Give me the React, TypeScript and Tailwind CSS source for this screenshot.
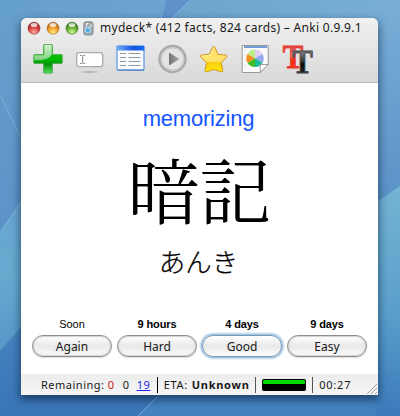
import React from "react";

function Wallpaper() {
  return (
    <svg className="absolute inset-0" width="400" height="416" viewBox="0 0 400 416" aria-hidden="true">
      <defs>
        <linearGradient id="sky" x1="0" y1="0" x2="1" y2="0">
          <stop offset="0" stopColor="#659fcb" />
          <stop offset=".4" stopColor="#6ba4ce" />
          <stop offset="1" stopColor="#78aed6" />
        </linearGradient>
        <linearGradient id="leftTop" x1="0" y1="0" x2="0" y2="1">
          <stop offset="0" stopColor="#679fcb" />
          <stop offset="1" stopColor="#5b93c8" />
        </linearGradient>
        <linearGradient id="leftTeal" x1="0" y1="0" x2="0" y2="1">
          <stop offset="0" stopColor="#69a5cf" />
          <stop offset=".5" stopColor="#66a9cf" />
          <stop offset="1" stopColor="#5598c9" />
        </linearGradient>
        <linearGradient id="deep" x1="0" y1="0" x2="0" y2="1">
          <stop offset="0" stopColor="#4682be" />
          <stop offset="1" stopColor="#3975b7" />
        </linearGradient>
        <linearGradient id="rightTop" x1="0" y1="0" x2="0" y2="1">
          <stop offset="0" stopColor="#78aed6" />
          <stop offset="1" stopColor="#5a92c7" />
        </linearGradient>
        <linearGradient id="rightTeal" x1="0" y1="0" x2="0" y2="1">
          <stop offset="0" stopColor="#74b3d3" />
          <stop offset=".55" stopColor="#5a9fcb" />
          <stop offset="1" stopColor="#3b7abb" />
        </linearGradient>
      </defs>
      <rect width="400" height="416" fill="url(#sky)" />
      <path d="M0 18H22V200L0 233Z" fill="url(#leftTop)" />
      <path d="M0 95L22 140V200L0 150Z" fill="#6399cb" opacity=".3" />
      <path d="M0 233L22 200V326L0 351Z" fill="url(#leftTeal)" />
      <path d="M0 351L22 326V394H160L138 416H0Z" fill="url(#deep)" />
      <path d="M138 416L160 394H378V416Z" fill="#4482bf" />
      <path d="M376 0H400V186L376 203Z" fill="url(#rightTop)" />
      <path d="M376 203L400 186V416H376Z" fill="url(#rightTeal)" />
      <path d="M166 0H190L160 30Z" fill="#5f92cb" />
      <path d="M190 0L160 30M138 416L160 394M0 95L22 140M0 233L22 200" stroke="#86b8dc" strokeWidth=".8" fill="none" />
    </svg>
  );
}

const lights = [
  { id: "close", dark: "#8d1d1d", mid: "#d94b48", light: "#ffb0a6" },
  { id: "min", dark: "#a35a10", mid: "#f0a02c", light: "#ffee8c" },
  { id: "max", dark: "#2d6915", mid: "#6fb83a", light: "#d0fa96" },
];

function TrafficLight({ id, dark, mid, light }: { id: string; dark: string; mid: string; light: string }) {
  return (
    <svg width="14" height="14" viewBox="0 0 14 14">
      <defs>
        <radialGradient id={id} cx=".5" cy=".85" r=".8">
          <stop offset="0" stopColor={light} />
          <stop offset=".5" stopColor={mid} />
          <stop offset="1" stopColor={dark} />
        </radialGradient>
      </defs>
      <circle cx="7" cy="7.2" r="6" fill={`url(#${id})`} stroke={dark} strokeOpacity=".65" strokeWidth=".8" />
      <ellipse cx="7" cy="3.9" rx="3.4" ry="2" fill="#fff" opacity=".75" />
    </svg>
  );
}

function DeckIcon() {
  return (
    <svg width="11" height="15" viewBox="0 0 11 15">
      <rect x=".8" y=".8" width="9.2" height="13.2" rx="2" fill="#a4a8aa" stroke="#858a8c" />
      <path d="M3 2h3L3 5zM8 3l1.5 2L7 6z" fill="#e7e9ea" />
      <circle cx="4.8" cy="8.8" r="3.2" fill="#c4dfed" />
      <path d="M4.8 5.5l1 2.2 2.3.3-1.7 1.5.5 2.4-2.1-1.2-2.1 1.2.4-2.4L1.6 8l2.3-.3z" fill="#50aee4" />
    </svg>
  );
}

function AddIcon() {
  return (
    <svg width="30" height="30" viewBox="0 0 30 30">
      <defs>
        <linearGradient id="plus" x1="0" y1="0" x2="0" y2="1">
          <stop offset="0" stopColor="#31b32b" /><stop offset=".5" stopColor="#00bd00" />
          <stop offset=".7" stopColor="#05930d" /><stop offset="1" stopColor="#56e360" />
        </linearGradient>
        <linearGradient id="gloss" x1="0" y1="0" x2="0" y2="1">
          <stop offset="0" stopColor="#d1f3ce" /><stop offset="1" stopColor="#7ecf7c" />
        </linearGradient>
      </defs>
      <path d="M11.5.5H18.5Q19.5.5 19.5 1.5V10.5H28.5Q29.3 10.5 29.3 11.5V18.5Q29.3 19.4 28.5 19.4H19.5V28.5Q19.5 29.3 18.5 29.3H11.5Q10.5 29.3 10.5 28.5V19.4H1.5Q.7 19.4.7 18.5V11.5Q.7 10.5 1.5 10.5H10.5V1.5Q10.5.5 11.5.5Z" fill="url(#plus)" stroke="#49a348" strokeWidth=".7" />
      <path d="M11.3 1.1H18.7V10.6Q17 14.5 11 15.5Q8 16.5 1.3 16.2V11.2H11.3Z" fill="url(#gloss)" />
    </svg>
  );
}

function FieldIcon() {
  return (
    <svg width="30" height="30" viewBox="0 0 30 30">
      <defs><radialGradient id="fieldShade"><stop stopColor="#777" stopOpacity=".7" /><stop offset="1" stopColor="#999" stopOpacity="0" /></radialGradient></defs>
      <rect x="1.7" y="8.7" width="26" height="14" rx="2.5" fill="#fff" stroke="#aaa" strokeWidth="1.3" />
      <path d="M5.2 11.5h2M8.2 11.5h2M5.2 19.5h2M8.2 19.5h2M7.7 12v7" stroke="#777" strokeWidth=".9" fill="none" />
      <ellipse cx="14.5" cy="28" rx="12" ry="1.3" fill="url(#fieldShade)" />
    </svg>
  );
}

function BrowseIcon() {
  return (
    <svg width="30" height="30" viewBox="0 0 30 30">
      <defs><linearGradient id="bar"><stop stopColor="#70aef6" /><stop offset=".6" stopColor="#1555e1" /><stop offset="1" stopColor="#1869ed" /></linearGradient></defs>
      <rect x="1" y="1.8" width="27" height="24.3" rx="1" fill="#fafcff" stroke="#639ae0" strokeWidth="1.3" />
      <path d="M.7 2H28.2V6.5H.7Z" fill="url(#bar)" />
      <path d="M2 26H28" stroke="#477abc" />
      <path d="M4 9.5h6m2.5 0h12M4 13.5h6m2.5 0h12M4 17.5h6m2.5 0h12M4 21.5h6m2.5 0h12" stroke="#90979d" strokeWidth="1" />
    </svg>
  );
}

function PlayIcon() {
  return (
    <svg width="30" height="30" viewBox="0 0 30 30">
      <defs><linearGradient id="play"><stop stopColor="#707070" /><stop offset="1" stopColor="#aaa" /></linearGradient></defs>
      <circle cx="14.5" cy="15" r="13" fill="#e4e4e4" stroke="#aaa" strokeWidth="2.4" />
      <circle cx="14.5" cy="15" r="11" fill="none" stroke="#c5c5c5" strokeWidth="1" />
      <path d="M11 8.5L21.5 15L11 21.5Z" fill="url(#play)" />
    </svg>
  );
}

function StarIcon() {
  return (
    <svg width="30" height="30" viewBox="0 0 30 30">
      <defs><linearGradient id="star" x1="0" y1="0" x2="0" y2="1"><stop stopColor="#ffe06b" /><stop offset=".58" stopColor="#ffe36c" /><stop offset=".62" stopColor="#f9ce16" /><stop offset="1" stopColor="#ffe900" /></linearGradient></defs>
      <path d="M13.5 3.3Q14.7 1.8 15.9 3.3L19.1 10.3L27.3 11.2Q29 11.7 27.7 13L22.2 18.8L23.8 26.6Q23.9 28.3 22.3 27.8L14.8 25.5L7.4 27.8Q5.8 28.2 6.1 26.6L7.5 18.8L1.7 13Q.6 11.6 2.4 11.1L10.4 10.2Z" fill="url(#star)" stroke="#cf9826" strokeWidth="1" />
      <path d="M14.7 4L11.4 11.3L3.5 12.2" fill="none" stroke="#ffefaa" />
    </svg>
  );
}

function ChartIcon() {
  return (
    <svg width="30" height="30" viewBox="0 0 30 30">
      <path d="M1.2 1.5H27.2V20.5L19.2 28.5H1.2Z" fill="#fafafa" stroke="#999" />
      <path d="M3 3H26" stroke="#447dcb" strokeWidth="1.5" />
      <path d="M3 6h2M3 11h2M3 16h2M3 21h2" stroke="#ddd" />
      <g transform="translate(14 14.3)">
        <path d="M0 0V-8.7A8.7 8.7 0 0 1 7.5-4.35Z" fill="#e2cdf3" />
        <path d="M0 0L7.5-4.35A8.7 8.7 0 0 1 7.5 4.35Z" fill="#91a7ed" />
        <path d="M0 0L7.5 4.35A8.7 8.7 0 0 1 0 8.7Z" fill="#16bd96" />
        <path d="M0 0V8.7A8.7 8.7 0 0 1-7.5 4.35Z" fill="#41bd22" />
        <path d="M0 0L-7.5 4.35A8.7 8.7 0 0 1-7.5-4.35Z" fill="#f58a21" />
        <path d="M0 0L-7.5-4.35A8.7 8.7 0 0 1 0-8.7Z" fill="#bdeb86" />
      </g>
      <path d="M19.2 28.5V20.5H27.2Z" fill="#fff" stroke="#999" />
    </svg>
  );
}

function FontIcon() {
  return (
    <svg width="30" height="30" viewBox="0 0 30 30" className="overflow-visible">
      <defs>
        <linearGradient id="redT" x1="0" y1="0" x2="0" y2="1"><stop offset=".25" stopColor="#d85050" /><stop offset=".5" stopColor="#f8806c" /><stop offset=".55" stopColor="#ef3011" /><stop offset="1" stopColor="#ff4217" /></linearGradient>
        <linearGradient id="blackT" x1="0" y1="0" x2="0" y2="1"><stop offset=".25" stopColor="#777" /><stop offset=".5" stopColor="#333" /><stop offset=".55" stopColor="#050505" /><stop offset="1" stopColor="#444" /></linearGradient>
      </defs>
      <g fontFamily="'Liberation Serif', serif" fontWeight="700" textAnchor="middle">
        <text x="10" y="24.4" fontSize="34" textLength="20.5" lengthAdjust="spacingAndGlyphs" fill="url(#redT)" stroke="#e8382c" strokeWidth="1">T</text>
        <text x="19.5" y="29.4" fontSize="34" textLength="20.5" lengthAdjust="spacingAndGlyphs" fill="url(#blackT)" stroke="#4a4a4a" strokeWidth="1">T</text>
      </g>
    </svg>
  );
}

const answers = [
  { time: "Soon", label: "Again", bold: false, focused: false },
  { time: "9 hours", label: "Hard", bold: true, focused: false },
  { time: "4 days", label: "Good", bold: true, focused: true },
  { time: "9 days", label: "Easy", bold: true, focused: false },
];

function AnswerButton({ time, label, bold, focused }: (typeof answers)[number]) {
  return (
    <div className="flex w-[80px] flex-col items-center">
      <div className={`h-[17px] font-['Liberation_Sans'] text-[11px] leading-[13px] text-black ${bold ? "font-bold tracking-[-.1px]" : ""}`}>{time}</div>
      <button className={`h-[22px] w-full rounded-full border bg-linear-to-b from-white via-[#e9e9e9] via-50% to-[#fbfbfb] text-[12px] leading-[19px] text-[#181818] ${focused ? "border-[#7499b8] shadow-[0_0_2px_1.5px_#8fb9dc]" : "border-[#8f8f8f] shadow-[inset_0_0_1px_1px_#d2d2d2,0_1px_1px_#ddd]"}`}>{label}</button>
    </div>
  );
}

export default function App() {
  return (
    <div className="relative h-[416px] w-[400px] overflow-hidden font-['Noto_Sans',sans-serif]">
      <Wallpaper />
      <div className="relative pt-[18px] pl-[21px]">
        <main className="flex h-[377px] w-[357px] flex-col overflow-hidden rounded-t-[6px] bg-white shadow-[0_4px_9px_1px_rgba(0,20,50,.55)]">
          <header className="flex h-[65px] flex-none flex-col border-b border-[#bcbcbc] bg-linear-to-b from-[#f1f1f1] to-[#d9d9d9]">
            <div className="flex h-[20px] flex-none items-center pl-[6px]">
              <div className="flex gap-[5px]">{lights.map((light) => <TrafficLight key={light.id} {...light} />)}</div>
              <div className="ml-[4px]"><DeckIcon /></div>
              <h1 className="ml-[6px] text-[12px] leading-[18px] tracking-[.3px] whitespace-nowrap text-[#191919]">mydeck* (412 facts, 824 cards) – Anki 0.9.9.1</h1>
            </div>
            <div className="flex gap-[11.6px] pt-[6px] pl-[12px]">
              <AddIcon /><FieldIcon /><BrowseIcon /><PlayIcon /><StarIcon /><ChartIcon /><FontIcon />
            </div>
          </header>
          <section className="flex h-[291px] flex-none flex-col items-center text-black">
            <div className="mt-[23px] h-[26px] pr-[2px] font-['Liberation_Sans'] text-[22px] leading-[26px] tracking-[-.2px] text-[#1555ff]">memorizing</div>
            <div lang="ja" className="mt-[16px] h-[78px] font-['Noto_Serif_CJK_JP','Noto_Sans_CJK_JP',serif] text-[72px] leading-[78px] font-light whitespace-nowrap [text-shadow:.6px_0_0_#000]">暗記</div>
            <div lang="ja" className="mt-[18px] h-[34px] pr-[2px] font-['Noto_Sans_CJK_JP',sans-serif] text-[26.5px] leading-[34px] font-light [-webkit-text-stroke:.25px_#000]">あんき</div>
            <div className="mt-[40px] flex gap-[5px]">
              {answers.map((answer) => <AnswerButton key={answer.label} {...answer} />)}
            </div>
          </section>
          <footer className="flex h-[21px] flex-none items-center bg-linear-to-b from-[#ececec] to-[#f6f6f6] pl-[20px] text-[11px] leading-[20px] whitespace-nowrap text-[#171717]">
            <span className="w-[67px] tracking-[.5px]">Remaining:</span>
            <span className="w-[15px] text-[#c71919]">0</span>
            <span className="w-[14px]">0</span>
            <span className="w-[20px] tracking-[.6px] text-[#2022ef] underline">19</span>
            <span className="h-[16px] w-px bg-black" />
            <span className="ml-[6px] w-[92px] tracking-[.75px]">ETA: <b>Unknown</b></span>
            <span className="h-[16px] w-px bg-[#555]" />
            <span className="ml-[6px] flex h-[12px] w-[44px] flex-col overflow-hidden rounded-[2px] bg-black p-px"><span className="h-[4px] rounded-[1px] bg-[#00db00]" /></span>
            <span className="ml-[6px] h-[16px] w-px bg-[#555]" />
            <span className="ml-[6px] w-[48px] tracking-[.8px]">00:27</span>
            <svg width="11" height="12" viewBox="0 0 11 12" className="mt-auto"><path d="M0 11L10 1M4 11L10 5M8 11L10 9" stroke="#888" strokeWidth=".8" /></svg>
          </footer>
        </main>
      </div>
    </div>
  );
}
